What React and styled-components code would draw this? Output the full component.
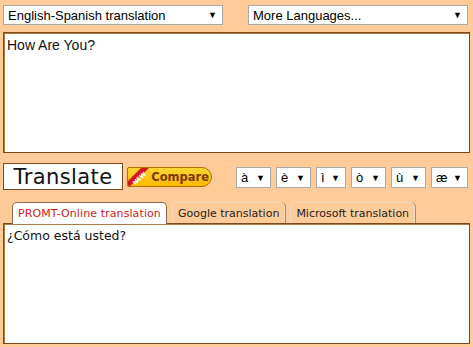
import React from "react";
import styled, { createGlobalStyle } from "styled-components";

const Global = createGlobalStyle`
  html, body {
    margin: 0;
    padding: 0;
    background: #ffcc99;
  }
`;

const Page = styled.div`
  width: 473px;
  height: 347px;
  box-sizing: border-box;
  padding: 5px 3px 0 3px;
  font-family: "Liberation Sans", Arial, sans-serif;
`;

const TopRow = styled.div`
  display: flex;
  gap: 25px;
`;

const Select = styled.div`
  box-sizing: border-box;
  width: ${(p) => p.$w}px;
  height: ${(p) => p.$h || 20}px;
  background: #fff;
  border: 1px solid #a9a9a9;
  display: flex;
  align-items: center;
  justify-content: space-between;
  padding: 0 5px 0 4px;
  font-size: 13px;
  color: #000;
`;

const Arrow = styled.span`
  font-size: 9px;
  color: #000;
`;

const Box = styled.div`
  box-sizing: border-box;
  width: 467px;
  height: 121px;
  margin-top: ${(p) => p.$mt || 0}px;
  background: #fff;
  border: 1px solid #7a4a1c;
  box-shadow: inset 1px 1px 0 #b07a40;
  padding: ${(p) => p.$pad};
  font-family: ${(p) => p.$font};
  font-size: ${(p) => p.$size}px;
  color: #111;
`;

const Controls = styled.div`
  display: flex;
  align-items: center;
  margin-top: 10px;
  height: 27px;
`;

const TranslateBtn = styled.div`
  box-sizing: border-box;
  width: 120px;
  height: 27px;
  background: #fff;
  border: 1px solid #7a4a1c;
  display: flex;
  align-items: center;
  justify-content: center;
  font-family: "DejaVu Sans", sans-serif;
  font-size: 21px;
  letter-spacing: 0.4px;
  color: #111;
`;

const CompareBtn = styled.div`
  position: relative;
  box-sizing: border-box;
  margin-left: 4px;
  width: 85px;
  height: 20px;
  border: 1px solid #b07000;
  border-radius: 2px 10px 10px 2px;
  background: linear-gradient(#ffd633, #ffb800);
  overflow: hidden;
  display: flex;
  align-items: center;
  justify-content: flex-end;
  padding-right: 2px;
  font-family: "DejaVu Sans", sans-serif;
  font-weight: bold;
  font-size: 11.5px;
  color: #7a3a00;
`;

const NewTag = styled.svg`
  position: absolute;
  left: 0;
  top: 0;
`;

const Accents = styled.div`
  display: flex;
  gap: 5px;
  margin-left: 24px;
  margin-top: 2px;
`;

const Tabs = styled.div`
  display: flex;
  gap: 5px;
  margin-top: 12px;
  margin-left: 9px;
  height: 21px;
  align-items: flex-end;
`;

const Tab = styled.div`
  box-sizing: border-box;
  height: ${(p) => (p.$active ? 22 : 21)}px;
  margin-bottom: ${(p) => (p.$active ? -1 : 0)}px;
  padding: 0 5px;
  letter-spacing: ${(p) => (p.$active ? 0.1 : 0)}px;
  border: 1px solid ${(p) => (p.$active ? "#8a6a4a" : "#f0dcc0")};
  border-bottom: none;
  border-radius: 5px 5px 0 0;
  background: ${(p) => (p.$active ? "#fff" : "#ffcc99")};
  color: ${(p) => (p.$active ? "#d01818" : "#222")};
  font-family: "DejaVu Sans", sans-serif;
  font-size: 11px;
  display: flex;
  align-items: center;
  position: relative;
  z-index: 1;
  box-shadow: ${(p) => (p.$active ? "none" : "1px 0 0 #b08a60")};
`;

const accents = [
  ["à", 35],
  ["è", 35],
  ["ì", 30],
  ["ò", 35],
  ["ù", 35],
  ["æ", 37],
];

export default function App() {
  return (
    <Page>
      <Global />
      <TopRow>
        <Select $w={220}>
          English-Spanish translation <Arrow>▼</Arrow>
        </Select>
        <Select $w={220}>
          More Languages... <Arrow>▼</Arrow>
        </Select>
      </TopRow>
      <Box $mt={7} $pad="4px 3px" $font={'"Liberation Sans", Arial, sans-serif'} $size={14}>
        How Are You?
      </Box>
      <Controls>
        <TranslateBtn>Translate</TranslateBtn>
        <CompareBtn>
          <NewTag width="22" height="20" viewBox="0 0 22 20">
            <polygon points="0,13 13,0 21,0 0,20" fill="#d8141c" />
            <text
              x="3"
              y="15"
              fontSize="6"
              fontWeight="bold"
              fill="#fff"
              fontFamily="DejaVu Sans, sans-serif"
              transform="rotate(-45 8 11)"
            >
              NEW
            </text>
          </NewTag>
          Compare
        </CompareBtn>
        <Accents>
          {accents.map(([c, w]) => (
            <Select key={c} $w={w} $h={21}>
              {c} <Arrow>▼</Arrow>
            </Select>
          ))}
        </Accents>
      </Controls>
      <Tabs>
        <Tab $active>PROMT-Online translation</Tab>
        <Tab>Google translation</Tab>
        <Tab>Microsoft translation</Tab>
      </Tabs>
      <Box $pad="4px 3px" $font={'"DejaVu Sans", sans-serif'} $size={12.5}>
        ¿Cómo está usted?
      </Box>
    </Page>
  );
}
